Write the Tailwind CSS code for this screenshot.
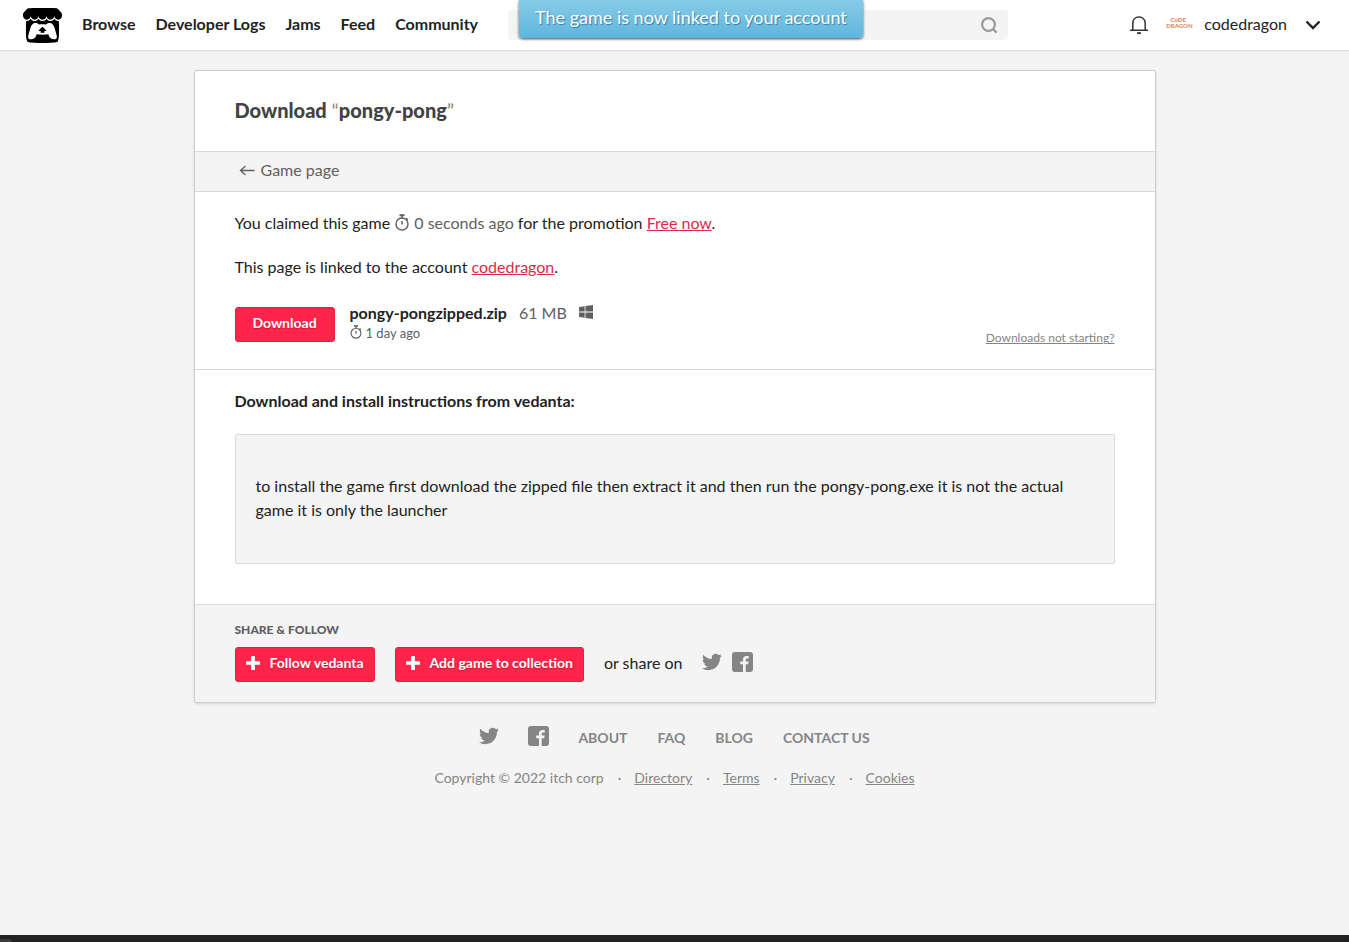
<!DOCTYPE html>
<html lang="en">
 <head>
  <meta charset="utf-8"/>
  <meta content="width=device-width, initial-scale=1.0" name="viewport"/>
  <title>Download pongy-pong - itch.io</title>
  <script src="https://cdn.jsdelivr.net/npm/@tailwindcss/browser@4"></script>
 </head>
 <body class="min-h-screen flex flex-col bg-[#f4f4f4] text-[#222] text-base font-['Lato',sans-serif]">
  <!-- shared icons -->
  <svg class="hidden" aria-hidden="true">
   <symbol id="twitter" viewBox="0 0 24 24">
    <path d="M23.953 4.57a10 10 0 01-2.825.775 4.958 4.958 0 002.163-2.723c-.951.555-2.005.959-3.127 1.184a4.92 4.92 0 00-8.384 4.482C7.69 8.095 4.067 6.13 1.64 3.162a4.822 4.822 0 00-.666 2.475c0 1.71.87 3.213 2.188 4.096a4.904 4.904 0 01-2.228-.616v.06a4.923 4.923 0 003.946 4.827 4.996 4.996 0 01-2.212.085 4.936 4.936 0 004.604 3.417 9.867 9.867 0 01-6.102 2.105c-.39 0-.779-.023-1.17-.067a13.995 13.995 0 007.557 2.209c9.053 0 13.998-7.496 13.998-13.985 0-.21 0-.42-.015-.63A9.935 9.935 0 0024 4.59z"/>
   </symbol>
   <symbol id="facebook" viewBox="0 0 21 20">
    <path d="M3 0h15a3 3 0 0 1 3 3v14a3 3 0 0 1-3 3h-4.300v-7.700h2.500l.4-2.800h-2.900V8c0-.9.400-1.400 1.400-1.400h1.600V4c-.5-.1-1.200-.1-2-.1-2.300 0-3.700 1.300-3.700 3.700v1.900H8.200v2.800H11V20H3a3 3 0 0 1-3-3V3a3 3 0 0 1 3-3z"/>
   </symbol>
   <symbol id="stopwatch" viewBox="0 0 14 17">
    <g fill="none" stroke="currentColor">
     <circle cx="7" cy="10" r="6" stroke-width="1.400"/>
     <path d="M4.500 1.200h5" stroke-width="2"/>
     <path d="M7 2v2.500M7 7v3.500" stroke-width="1.500"/>
     <path d="M11.300 4.300l1.500 1.500" stroke-width="1.500"/>
    </g>
   </symbol>
   <symbol id="plus" viewBox="0 0 15 15">
    <path d="M5.500 0h4v5.500H15v4H9.500V15h-4V9.500H0v-4h5.500z"/>
   </symbol>
  </svg>

  <header class="h-[51px] shrink-0 flex items-center bg-white border-b border-[#dcdcdc] shadow-xs pl-[23px] pr-7">
   <a href="#" aria-label="itch.io">
    <svg class="w-[39px] h-[35px]" viewBox="0 1.200 24 21.600" fill="#000" preserveAspectRatio="none">
     <path d="M3.130 1.338C2.080 1.960.02 4.328 0 4.950v1.030c0 1.303 1.220 2.450 2.325 2.450 1.330 0 2.436-1.102 2.436-2.410 0 1.308 1.070 2.410 2.400 2.410 1.328 0 2.362-1.102 2.362-2.410 0 1.308 1.137 2.410 2.466 2.410h.024c1.330 0 2.466-1.102 2.466-2.410 0 1.308 1.034 2.410 2.363 2.410 1.330 0 2.400-1.102 2.400-2.410 0 1.308 1.106 2.410 2.435 2.410C22.780 8.430 24 7.282 24 5.980V4.950c-.02-.62-2.082-2.990-3.130-3.612-3.253-.114-5.508-.134-8.870-.133-3.362 0-7.945.053-8.870.133zm6.376 6.477a2.740 2.740 0 0 1-.468.602c-.5.49-1.190.795-1.947.795a2.786 2.786 0 0 1-1.950-.795c-.182-.178-.32-.37-.446-.59-.127.222-.303.412-.486.59a2.788 2.788 0 0 1-1.950.795c-.092 0-.187-.025-.264-.052-.107 1.113-.152 2.176-.168 2.950v.005l-.006 1.167c.02 2.334-.23 7.564 1.030 8.850 1.952.454 5.545.662 9.150.663 3.605 0 7.198-.21 9.150-.664 1.260-1.284 1.010-6.514 1.030-8.848l-.006-1.167v-.004c-.016-.775-.06-1.838-.168-2.950-.077.026-.172.052-.263.052a2.788 2.788 0 0 1-1.950-.795c-.184-.178-.36-.368-.486-.59-.127.22-.265.412-.447.59a2.786 2.786 0 0 1-1.950.794c-.76 0-1.446-.303-1.948-.793a2.740 2.740 0 0 1-.468-.602 2.738 2.738 0 0 1-.463.602 2.787 2.787 0 0 1-1.950.794h-.16a2.787 2.787 0 0 1-1.950-.793 2.738 2.738 0 0 1-.464-.602zm-2.004 2.590v.002c.795.002 1.500 0 2.373.953.687-.072 1.406-.108 2.125-.107.72 0 1.438.035 2.125.107.873-.953 1.578-.95 2.372-.953.376 0 1.876 0 2.920 2.934l1.123 4.028c.832 2.995-.266 3.068-1.636 3.070-2.030-.075-3.156-1.550-3.156-3.025-1.124.184-2.436.276-3.748.277-1.312 0-2.624-.093-3.748-.277 0 1.475-1.125 2.950-3.156 3.026-1.370-.004-2.468-.077-1.636-3.072l1.122-4.027c1.045-2.934 2.545-2.934 2.920-2.934zM12 12.714c-.002.002-2.140 1.964-2.523 2.662l1.400-.056v1.220c0 .056.56.033 1.123.007.562.026 1.124.05 1.124-.008v-1.220l1.400.055C14.138 14.677 12 12.713 12 12.713z"/>
    </svg>
   </a>
   <nav class="flex gap-5 ml-5 pb-0.5 font-bold whitespace-nowrap">
    <a href="#">Browse</a>
    <a href="#">Developer Logs</a>
    <a href="#">Jams</a>
    <a href="#">Feed</a>
    <a href="#">Community</a>
   </nav>
   <form class="relative w-[500px] h-[30px] ml-[30px] flex">
    <input class="w-full rounded-sm bg-[#f4f4f4] px-2.5" type="text" aria-label="Search"/>
    <button class="absolute right-2.5 top-1.5" type="button" aria-label="Submit search">
     <svg class="size-[18px]" viewBox="0 0 18 18" fill="none" stroke="#999" stroke-width="2.200">
      <circle cx="8.500" cy="8.500" r="6.400"/>
      <path d="M13 13l3.600 3.600"/>
     </svg>
    </button>
    <div class="absolute left-[11px] -top-2.5 h-[38px] px-4 rounded-b bg-linear-to-b from-[#86cbe8] to-[#5db6dd] text-white text-lg leading-[34px] whitespace-nowrap shadow-[0_1px_3px_rgba(0,0,0,0.7)] text-shadow-[1px_1px_1px_rgba(0,60,100,0.5)]" role="status">The game is now linked to your account</div>
   </form>
   <div class="flex items-center ml-auto">
    <button type="button" aria-label="Notifications">
     <svg class="w-[18px] h-[19px]" viewBox="0 0 18 19" fill="none" stroke="#333" stroke-width="1.500">
      <path d="M0 14.300h18M2.800 14.300V7.500C2.800 3.800 5.300 1 9 1s6.200 2.800 6.200 6.500v6.800"/>
      <path d="M7 16.800c.6 1.300 3.400 1.300 4 0z" fill="#333" stroke-width="1"/>
     </svg>
    </button>
    <a class="flex items-center pb-0.5" href="#">
     <span class="w-6 ml-[18px] mr-3.5 pb-0.5 text-center text-[6px] leading-[6px] font-black text-[#e08a5c]">CoDE<br/>DRAGON</span>
     codedragon
    </a>
    <button class="ml-[18px]" type="button" aria-label="Account menu">
     <svg class="w-4 h-[10px]" viewBox="0 0 16 10" fill="none" stroke="#222" stroke-width="2.400">
      <path d="M1.500 1.500L8 8l6.500-6.500"/>
     </svg>
    </button>
   </div>
  </header>

  <main class="w-full max-w-[962px] mx-auto mt-[19px] bg-white border border-[#cdcdcd] rounded-[3px] shadow-sm">
   <h1 class="px-10 pt-[25px] pb-[27px] text-xl font-black text-[#434343]">Download <span class="font-normal text-[#858585]">“</span>pongy-pong<span class="font-normal text-[#858585]">”</span></h1>
   <nav class="h-[41px] px-11 flex items-center border-y border-[#d9d9d9] bg-[#f4f4f4] text-[#606060]">
    <a class="flex items-center gap-1.5 pb-1" href="#">
     <svg class="w-4 h-3" viewBox="0 0 16 12" fill="none" stroke="currentColor" stroke-width="1.300">
      <path d="M15.500 6.500H1.500M6.500 2L1.500 6.500l5 4.500"/>
     </svg>
     Game page
    </a>
   </nav>

   <section class="px-10 pt-[19px] pb-[23px] border-b border-[#d9d9d9]">
    <p class="mb-5 leading-6">You claimed this game <span class="text-[#606060]"><svg class="inline w-4 h-[17px] mb-1"><use href="#stopwatch"/></svg> 0 seconds ago</span> for the promotion <a class="text-[#da2c49] underline" href="#">Free now</a>.</p>
    <p class="mb-6 leading-6">This page is linked to the account <a class="text-[#da2c49] underline" href="#">codedragon</a>.</p>
    <div class="flex min-h-[43px]">
     <button class="self-start w-[100px] h-[35px] mt-1 pb-1 rounded-[3px] border border-[#e3203f] bg-[#ff2449] text-white text-sm font-bold text-shadow-[0_1px_1px_rgba(0,0,0,0.25)]" type="button">Download</button>
     <div class="ml-[15px]">
      <div class="flex items-center leading-5">
       <strong class="font-bold">pongy-pongzipped.zip</strong>
       <span class="ml-3 text-[#606060]">61 MB</span>
       <svg class="w-[14px] h-[14px] ml-3 mb-0.5" viewBox="0 0 14 14" fill="#606060" role="img" aria-label="Windows">
        <path d="M0 2l5.700-.8v5.400H0zM6.500 1.100L14 0v6.600H6.500zM0 7.400h5.700v5.400L0 12zM6.500 7.400H14V14l-7.500-1.100z"/>
       </svg>
      </div>
      <div class="flex items-center gap-1 text-[13px] leading-5 text-[#606060]">
       <svg class="w-3 h-[14px] mb-0.5"><use href="#stopwatch"/></svg>
       1 day ago
      </div>
     </div>
     <a class="ml-auto self-end text-xs leading-4 text-[#858585] underline" href="#">Downloads not starting?</a>
    </div>
   </section>

   <section class="px-10 pt-[19px] pb-10">
    <h2 class="mb-[21px] leading-6 font-bold">Download and install instructions from vedanta:</h2>
    <div class="px-5 pt-[39px] pb-[41px] rounded-xs border border-[#d9d9d9] bg-[#f4f4f4]">
     <p class="leading-6">to install the game first download the zipped file then extract it and then run the pongy-pong.exe it is not the actual game it is only the launcher</p>
    </div>
   </section>

   <section class="px-10 pt-4 pb-5 border-t border-[#d9d9d9] rounded-b-[3px] bg-[#f4f4f4]">
    <h3 class="mb-2 text-xs leading-[18px] font-black text-[#606060]">SHARE &amp; FOLLOW</h3>
    <div class="flex items-center">
     <button class="flex items-center gap-2.5 h-[35px] px-2.5 pb-1 rounded-[3px] border border-[#e3203f] bg-[#ff2449] text-white text-sm font-bold text-shadow-[0_1px_1px_rgba(0,0,0,0.25)]" type="button">
      <svg class="size-[14px]" fill="#fff"><use href="#plus"/></svg>
      Follow vedanta
     </button>
     <button class="flex items-center gap-2.5 h-[35px] ml-5 px-2.5 pb-1 rounded-[3px] border border-[#e3203f] bg-[#ff2449] text-white text-sm font-bold text-shadow-[0_1px_1px_rgba(0,0,0,0.25)]" type="button">
      <svg class="size-[14px]" fill="#fff"><use href="#plus"/></svg>
      Add game to collection
     </button>
     <span class="ml-5 mr-5 pb-1">or share on</span>
     <a class="pb-1.5" href="#" aria-label="Share on Twitter"><svg class="size-5" fill="#858585"><use href="#twitter"/></svg></a>
     <a class="ml-2.5 pb-1.5" href="#" aria-label="Share on Facebook"><svg class="w-[21px] h-5" fill="#858585"><use href="#facebook"/></svg></a>
    </div>
   </section>
  </main>

  <footer class="mt-5 pb-8 text-sm text-[#858585]">
   <div class="flex justify-center items-center h-[30px] font-bold">
    <a class="pb-1" href="#" aria-label="Twitter"><svg class="size-5" fill="#858585"><use href="#twitter"/></svg></a>
    <a class="mx-[29px] pb-1" href="#" aria-label="Facebook"><svg class="w-[21px] h-5" fill="#858585"><use href="#facebook"/></svg></a>
    <div class="flex gap-[30px]">
     <a href="#">ABOUT</a>
     <a href="#">FAQ</a>
     <a href="#">BLOG</a>
     <a href="#">CONTACT US</a>
    </div>
   </div>
   <div class="flex justify-center mt-[15px] leading-5">
    <span>Copyright © 2022 itch corp</span>
    <span class="ml-[14px] mr-[13px]">·</span>
    <a class="underline" href="#">Directory</a>
    <span class="ml-[14px] mr-[13px]">·</span>
    <a class="underline" href="#">Terms</a>
    <span class="ml-[14px] mr-[13px]">·</span>
    <a class="underline" href="#">Privacy</a>
    <span class="ml-[14px] mr-[13px]">·</span>
    <a class="underline" href="#">Cookies</a>
   </div>
  </footer>

  <div class="mt-auto h-[7px] bg-linear-to-b from-[#202522] to-[#211f21]">
   <div class="w-3 h-[3px] mt-1 rounded-tr-full bg-[#3a3a3a]"></div>
  </div>
 </body>
</html>
